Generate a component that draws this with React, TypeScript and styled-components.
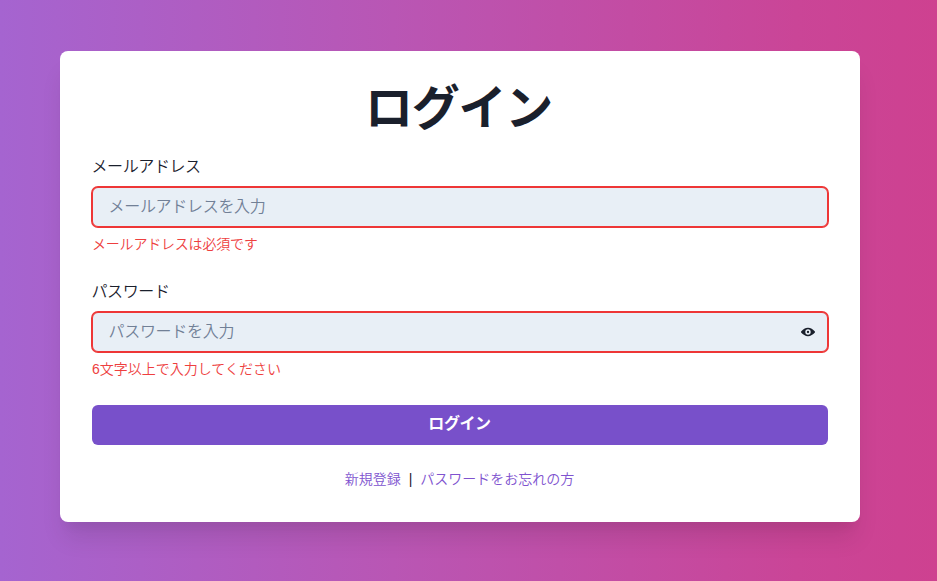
import React, { useState } from "react";
import styled, { createGlobalStyle } from "styled-components";

const GlobalStyle = createGlobalStyle`
  *, *::before, *::after { box-sizing: border-box; }
  body {
    margin: 0;
    color: #1a202c;
    font-family: "Liberation Sans", "Noto Sans CJK JP", sans-serif;
    font-size: 16px;
    line-height: 24px;
    font-weight: 350;
  }
  input, button { font: inherit; color: inherit; letter-spacing: inherit; }
`;

const Page = styled.main`
  height: 581px;
  display: flex;
  align-items: flex-start;
  padding: 51px 77px 0 60px;
  background: linear-gradient(to right, #a564d0 0%, #b956b4 42%, #ca4597 85%, #ce4190 100%);
`;

const Card = styled.form`
  width: 800px;
  height: 471px;
  padding: 32px;
  display: flex;
  flex-direction: column;
  border-radius: 8px;
  background: #fff;
  box-shadow: 0 20px 25px -5px rgba(0, 0, 0, 0.1), 0 10px 10px -5px rgba(0, 0, 0, 0.04);
`;

const Title = styled.h1`
  margin: -5px 0 15px;
  height: 62px;
  padding-right: 3px;
  font-size: 48px;
  line-height: 62px;
  font-weight: 700;
  letter-spacing: -1.2px;
  text-align: center;
`;

const Field = styled.div`
  height: 101px;
  margin-bottom: 24px;
  display: flex;
  flex-direction: column;
`;

const Label = styled.label`
  height: 24px;
  margin: 0 0 8px -0.5px;
  letter-spacing: -0.4px;
`;

const InputBox = styled.div`
  display: flex;
  align-items: center;
  height: 40px;
  flex: none;
  padding-right: 12px;
  border: 1px solid #ee3636;
  border-radius: 6px;
  box-shadow: 0 0 0 1px #ee3636;
  background: #e8eff6;
`;

const Input = styled.input`
  flex: 1;
  height: 38px;
  min-width: 0;
  padding: 0 16px 0 15.5px;
  border: 0;
  outline: 0;
  background: transparent;
  letter-spacing: -0.3px;
  &::placeholder { color: #718096; opacity: 1; }
`;

const EyeButton = styled.button`
  display: flex;
  padding: 0;
  border: 0;
  background: transparent;
  cursor: pointer;
`;

const ErrorText = styled.p<{ $tracking?: string }>`
  margin: 7px 0 0;
  font-size: 14px;
  line-height: 21px;
  letter-spacing: ${(p) => p.$tracking ?? "normal"};
  color: #ee3f3f;
`;

const Submit = styled.button`
  height: 40px;
  flex: none;
  padding: 0 1px 2px 0;
  border: 0;
  border-radius: 6px;
  background: #7850ca;
  color: #fff;
  font-weight: 700;
  letter-spacing: -0.4px;
  cursor: pointer;
`;

const Links = styled.nav`
  margin-top: 24px;
  display: flex;
  justify-content: center;
  gap: 8px;
  padding-right: 1px;
  font-size: 14px;
  line-height: 21px;
`;

const Link = styled.a`
  color: #8053cf;
  text-decoration: none;
`;

const EyeIcon = () => (
  <svg width="14" height="14" viewBox="0 0 24 24" fill="currentColor" aria-hidden="true">
    <path d="M23.432,10.524C20.787,7.614,16.4,4.538,12,4.6,7.6,4.537,3.213,7.615.568,10.524a2.211,2.211,0,0,0,0,2.948C3.182,16.351,7.507,19.4,11.839,19.4h.308c4.347,0,8.671-3.049,11.288-5.929A2.21,2.21,0,0,0,23.432,10.524ZM7.4,12A4.6,4.6,0,1,1,12,16.6,4.6,4.6,0,0,1,7.4,12Z" />
    <circle cx="12" cy="12" r="2" />
  </svg>
);

export default function App() {
  const [visible, setVisible] = useState(false);
  return (
    <>
      <GlobalStyle />
      <Page>
        <Card noValidate onSubmit={(e) => e.preventDefault()}>
          <Title>ログイン</Title>
          <Field>
            <Label htmlFor="email">メールアドレス</Label>
            <InputBox>
              <Input id="email" type="email" placeholder="メールアドレスを入力" />
            </InputBox>
            <ErrorText $tracking="-0.2px">メールアドレスは必須です</ErrorText>
          </Field>
          <Field>
            <Label htmlFor="password">パスワード</Label>
            <InputBox>
              <Input id="password" type={visible ? "text" : "password"} placeholder="パスワードを入力" />
              <EyeButton type="button" onClick={() => setVisible(!visible)}>
                <EyeIcon />
              </EyeButton>
            </InputBox>
            <ErrorText>6文字以上で入力してください</ErrorText>
          </Field>
          <Submit type="submit">ログイン</Submit>
          <Links>
            <Link href="#signup">新規登録</Link>
            <span>|</span>
            <Link href="#reset">パスワードをお忘れの方</Link>
          </Links>
        </Card>
      </Page>
    </>
  );
}
